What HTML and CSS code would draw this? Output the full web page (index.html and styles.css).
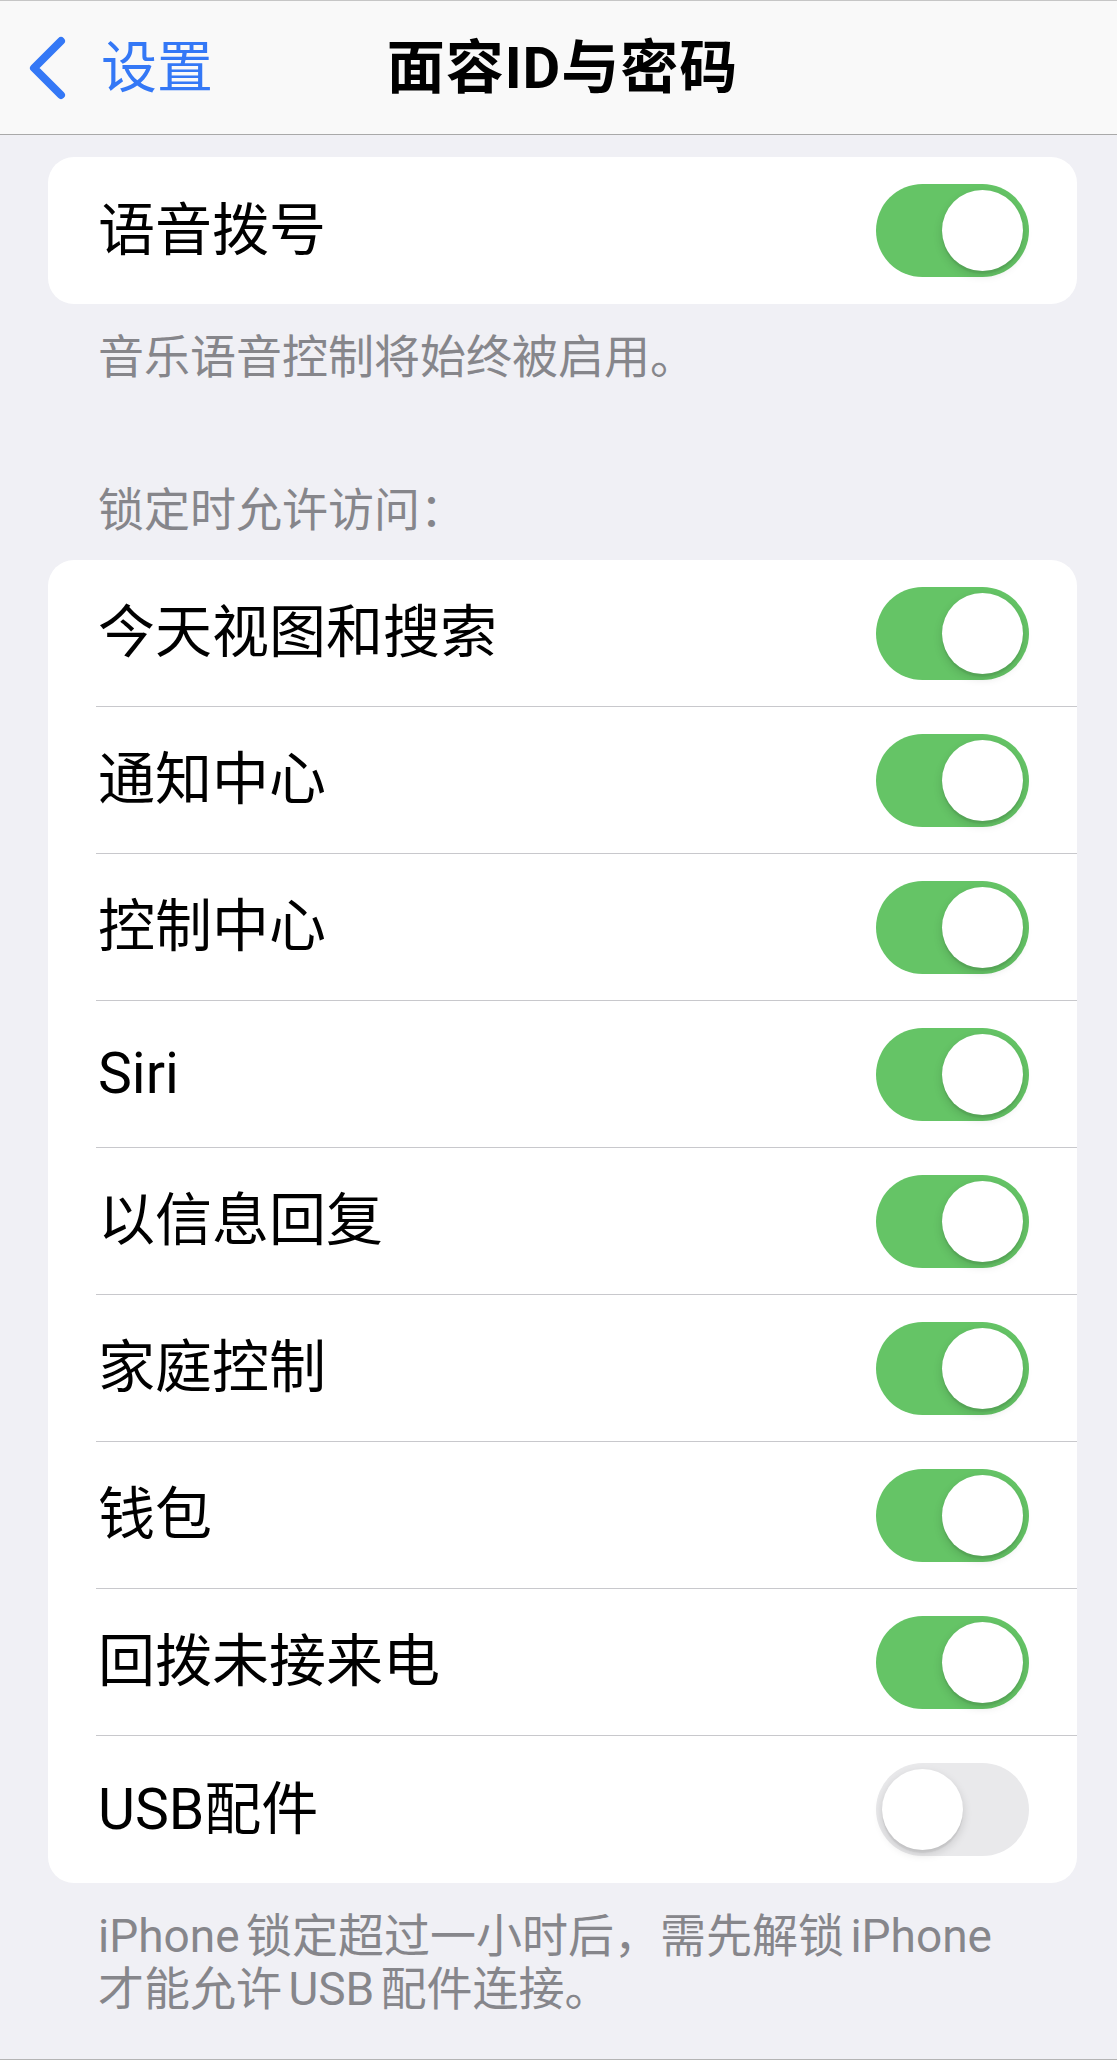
FILE: index.html
```html
<!DOCTYPE html>
<html lang="zh-CN">
<head>
    <meta charset="UTF-8">
    <meta name="viewport" content="width=device-width, initial-scale=1.0">
    <title>面容ID与密码</title>
    <link rel="stylesheet" href="styles.css">
</head>
<body>

    <header class="navbar">
        <a class="back" href="#">
            <svg class="chevron" width="40" height="66" viewBox="0 0 40 66">
                <path d="M33 6 L6 33 L33 60" fill="none" stroke="#3478f6" stroke-width="8" stroke-linecap="round" stroke-linejoin="round"/>
            </svg>
            <span>设置</span>
        </a>
        <h1 class="title">面容ID与密码</h1>
        <div></div>
    </header>

    <!-- 语音拨号 -->
    <div class="card first">
        <div class="row">
            <div class="row-inner">
                <span class="label">语音拨号</span>
                <span class="switch on"><span class="knob"></span></span>
            </div>
        </div>
    </div>
    <p class="footer">音乐语音控制将始终被启用。</p>

    <p class="section-title">锁定时允许访问：</p>
    <div class="card">
        <div class="row">
            <div class="row-inner">
                <span class="label">今天视图和搜索</span>
                <span class="switch on"><span class="knob"></span></span>
            </div>
        </div>
        <div class="row">
            <div class="row-inner">
                <span class="label">通知中心</span>
                <span class="switch on"><span class="knob"></span></span>
            </div>
        </div>
        <div class="row">
            <div class="row-inner">
                <span class="label">控制中心</span>
                <span class="switch on"><span class="knob"></span></span>
            </div>
        </div>
        <div class="row">
            <div class="row-inner">
                <span class="label">Siri</span>
                <span class="switch on"><span class="knob"></span></span>
            </div>
        </div>
        <div class="row">
            <div class="row-inner">
                <span class="label">以信息回复</span>
                <span class="switch on"><span class="knob"></span></span>
            </div>
        </div>
        <div class="row">
            <div class="row-inner">
                <span class="label">家庭控制</span>
                <span class="switch on"><span class="knob"></span></span>
            </div>
        </div>
        <div class="row">
            <div class="row-inner">
                <span class="label">钱包</span>
                <span class="switch on"><span class="knob"></span></span>
            </div>
        </div>
        <div class="row">
            <div class="row-inner">
                <span class="label">回拨未接来电</span>
                <span class="switch on"><span class="knob"></span></span>
            </div>
        </div>
        <div class="row">
            <div class="row-inner">
                <span class="label">USB配件</span>
                <span class="switch"><span class="knob"></span></span>
            </div>
        </div>
    </div>
    <p class="footer last">iPhone 锁定超过一小时后，需先解锁 iPhone 才能允许 USB 配件连接。</p>

</body>
</html>
```

FILE: styles.css
```css
body {
    margin: 0;
    min-height: 2059px;
    background-color: #f0f0f5;
    border-bottom: 1px solid #b4b4b4;
    font-family: Roboto, "Noto Sans CJK SC", sans-serif;
    color: #000;
}
.navbar {
    box-sizing: border-box;
    height: 135px;
    display: grid;
    grid-template-columns: 1fr auto 1fr;
    align-items: center;
    background-color: #f9f9f9;
    border-top: 1px solid #c6c6c6;
    border-bottom: 1px solid #a9a9a9;
}
.back {
    display: flex;
    align-items: center;
    padding-left: 28px;
    color: #3478f6;
    text-decoration: none;
    font-size: 56px;
    line-height: 66px;
}
.back span {
    margin-left: 33px;
}
.title {
    margin: 0;
    padding-left: 8px;
    font-size: 58px;
    font-weight: 700;
    letter-spacing: 1px;
    line-height: 66px;
}
.card {
    margin: 0 40px 0 48px;
    background-color: #fff;
    border-radius: 26px;
    overflow: hidden;
}
.card.first {
    margin-top: 22px;
}
.row {
    padding-left: 48px;
}
.row-inner {
    box-sizing: border-box;
    height: 147px;
    display: flex;
    align-items: center;
    justify-content: space-between;
    padding: 0 48px 0 2px;
    border-bottom: 1px solid #c8c8cc;
}
.row:last-child .row-inner {
    border-bottom: none;
}
.label {
    font-size: 57px;
    line-height: 66px;
}
.switch {
    box-sizing: border-box;
    width: 153px;
    height: 93px;
    padding: 6px;
    display: flex;
    align-items: center;
    border-radius: 47px;
    background-color: #e9e9eb;
}
.switch.on {
    justify-content: flex-end;
    background-color: #65c466;
}
.knob {
    width: 81px;
    height: 81px;
    border-radius: 50%;
    background-color: #fff;
    box-shadow: 0 4px 10px rgba(0, 0, 0, 0.15), 0 3px 1px rgba(0, 0, 0, 0.06);
}
.footer {
    margin: 0;
    padding: 26px 98px 0 98px;
    font-size: 46px;
    line-height: 54px;
    color: #86868b;
}
.footer.last {
    padding-top: 27px;
    padding-right: 90px;
    line-height: 53px;
    word-spacing: -5px;
}
.section-title {
    margin: 99px 0 23px;
    padding-left: 98px;
    font-size: 46px;
    line-height: 54px;
    color: #86868b;
}
```
